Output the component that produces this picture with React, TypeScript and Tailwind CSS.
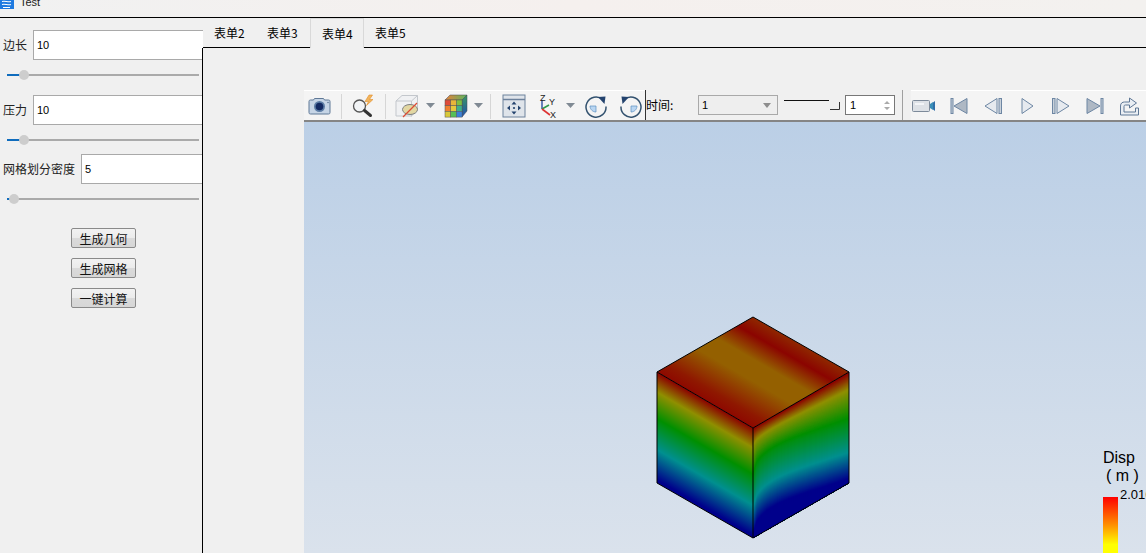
import type { ReactNode } from "react";

const CJK = "font-['Noto_Sans_CJK_SC','Liberation_Sans',sans-serif]";

// value ramp used on the result plot: 0 = red ... 1 = blue
const ramp: [number, number[]][] = [
  [0, [139, 0, 0]],
  [0.15, [143, 143, 0]],
  [0.41, [0, 143, 0]],
  [0.72, [0, 143, 143]],
  [0.96, [0, 0, 139]],
  [1, [0, 0, 139]],
];

function rampColor(t: number) {
  for (let i = 1; i < ramp.length; i++) {
    if (t <= ramp[i][0]) {
      const [t0, a] = ramp[i - 1];
      const [t1, b] = ramp[i];
      const k = (t - t0) / (t1 - t0);
      return `rgb(${a.map((v, j) => Math.round(v + (b[j] - v) * k)).join(",")})`;
    }
  }
  return "rgb(0,0,139)";
}

// right face has curved bands, so paint it back to front as filled regions
function rightFaceBands() {
  const bands = [];
  for (let i = 0; i <= 110; i++) {
    const t = i / 110;
    const bow = 16 * Math.min(1, t * 2.2);
    const pts: string[] = [];
    for (let x = 0; x <= 96; x += 4) {
      const u = x / 96;
      const y = 428 - (55.5 * x) / 96 + t * 110 - bow * Math.sin(Math.PI * Math.pow(u, 0.45));
      pts.push(`${753 + x},${y.toFixed(1)}`);
    }
    bands.push(<polygon key={i} points={`${pts.join(" ")} 849,560 753,560`} fill={rampColor(t)} />);
  }
  return bands;
}

function Slider({ thumb, className }: { thumb: number; className: string }) {
  return (
    <div className={`relative ml-[7px] h-[2px] w-[192px] bg-[#aaaaaa] ${className}`}>
      <div className="h-[2px] bg-[#0f6cbd]" style={{ width: thumb }} />
      <div
        className="absolute top-[-4px] h-[10px] w-[10px] rounded-full bg-[#cdcdcd]"
        style={{ left: thumb - 5 }}
      />
    </div>
  );
}

function Field({ label, value, labelWidth, className }: { label: string; value: string; labelWidth: string; className: string }) {
  return (
    <div className={`flex h-[30px] items-center ${className}`}>
      <span className={`${labelWidth} shrink-0 pl-[3px] text-[12px] text-[#222]`}>{label}</span>
      <div className="flex h-[30px] flex-1 items-center border border-r-0 border-[#a9a9a9] bg-white pl-[3px] font-['Liberation_Sans'] text-[11px] text-black">
        {value}
      </div>
    </div>
  );
}

function ActionButton({ children, className }: { children: ReactNode; className: string }) {
  return (
    <button className={`ml-[71px] block h-[20px] w-[65px] rounded-[2px] border border-[#8a8a8a] bg-[linear-gradient(#f2f2f2_0%,#ebebeb_50%,#dadada_52%,#d6d6d6_100%)] text-[12px] leading-[17px] text-[#111] ${className}`}>
      {children}
    </button>
  );
}

function Tab({ label, width, active }: { label: string; width: string; active?: boolean }) {
  return (
    <div
      className={`flex h-[30px] ${width} items-center pl-[11px] text-[12px] text-black ${
        active ? "relative z-10 border border-b-0 border-[#d9d9d9] bg-[#f0f0f0] pl-[10px]" : "border-b border-black"
      }`}
    >
      {label}
    </div>
  );
}

function Sep({ w }: { w: string }) {
  return <div className={`flex h-[30px] ${w} shrink-0 justify-center pt-[3px]`}><div className="h-[25px] w-px bg-[#d6d6d6]" /></div>;
}

function Arrow({ w }: { w: string }) {
  return (
    <div className={`flex ${w} shrink-0 items-center justify-center`}>
      <svg width="9" height="5" className="shrink-0"><path d="M0 0h9L4.500 5z" fill="#808a94" /></svg>
    </div>
  );
}

function Tool({ w, children }: { w: string; children: ReactNode }) {
  return <div className={`flex h-[30px] ${w} shrink-0 items-center justify-center`}>{children}</div>;
}

function CameraIcon() {
  return (
    <svg width="24" height="20" viewBox="0 0 24 20">
      <path d="M1 5.500c0-1 .6-1.500 1.500-1.500h3l1-1.500h9l1 1.500h4c1 0 1.500.5 1.500 1.500v11c0 1-.5 1.500-1.500 1.500h-18c-1 0-1.500-.5-1.500-1.500z" fill="#c6d5e6" stroke="#5f7896" />
      <circle cx="11.500" cy="10.500" r="5.500" fill="#5d7ea6" />
      <circle cx="11.500" cy="10.500" r="3.800" fill="#132a63" />
      <circle cx="20" cy="6.500" r="0.800" fill="#5f7896" />
    </svg>
  );
}

function ZoomBoltIcon() {
  return (
    <svg width="26" height="24" viewBox="0 0 26 24">
      <circle cx="8.500" cy="12" r="6" fill="#f2f4f6" stroke="#555" strokeWidth="1.300" />
      <path d="M13.500 16.500L19.500 21.500" stroke="#333" strokeWidth="3" strokeLinecap="round" />
      <path d="M18 1l-4 6.500h3.500l-2 4 6.500-6h-3.500l3-4.500z" fill="#f2b45c" stroke="#e08e2c" strokeWidth="0.600" />
    </svg>
  );
}

function HideCubeIcon() {
  return (
    <svg width="24" height="24" viewBox="0 0 24 24">
      <path d="M1 7l6-5.500h15.500v14l-6 6.500H1z" fill="#f0f1f3" stroke="#c3c7cc" />
      <path d="M1 7h15.500v15.500M16.500 7l6-5.500" fill="none" stroke="#c3c7cc" />
      <ellipse cx="15" cy="15.500" rx="7.500" ry="5" fill="#e2d7a2" stroke="#7d7f80" />
      <path d="M8 23L22 9" stroke="#dd4a33" strokeWidth="1.200" />
    </svg>
  );
}

function ColorCubeIcon() {
  const front = [
    ["#e04b3a", "#e8b53a", "#7fbf3f"],
    ["#f08030", "#e6c83c", "#3fb08a"],
    ["#d8c83a", "#55bf55", "#3a80d8"],
  ];
  return (
    <svg width="24" height="24" viewBox="0 0 24 24">
      <defs>
        <linearGradient id="cubeTop" x1="0" x2="1" y1="0" y2="0">
          <stop offset="0" stopColor="#e8803a" />
          <stop offset="1" stopColor="#58b860" />
        </linearGradient>
        <linearGradient id="cubeSide" x1="0" x2="0" y1="0" y2="1">
          <stop offset="0" stopColor="#3a9a60" />
          <stop offset="1" stopColor="#1f4fb0" />
        </linearGradient>
      </defs>
      <path d="M1 6l5-5h17l-5 5z" fill="url(#cubeTop)" stroke="#445" strokeWidth="0.500" />
      <path d="M18 6l5-5v16l-5 6z" fill="url(#cubeSide)" stroke="#445" strokeWidth="0.500" />
      {front.map((row, r) =>
        row.map((c, i) => <rect key={`${r}${i}`} x={1 + i * 5.700} y={6 + r * 5.700} width="5.700" height="5.700" fill={c} stroke="#555" strokeWidth="0.500" />)
      )}
    </svg>
  );
}

function FitIcon() {
  return (
    <svg width="24" height="24" viewBox="0 0 24 24">
      <rect x="1" y="1" width="22" height="22" fill="#dfe4ea" stroke="#6d829c" />
      <path d="M1 5.500h22" stroke="#6d829c" strokeWidth="1.500" />
      <path d="M12 7.500l2.500 3h-5zM12 20.500l2.500-3h-5zM5 14l3-2.500v5zM19 14l-3-2.500v5z" fill="#24436e" />
      <circle cx="12" cy="14" r="1.100" fill="#24436e" />
    </svg>
  );
}

function AxesIcon() {
  return (
    <svg width="22" height="26" viewBox="0 0 22 26" className="font-['Liberation_Sans']">
      <path d="M7 16V7" stroke="#2a4fa0" strokeWidth="1.400" />
      <path d="M7 16l7-4" stroke="#2f9a4a" strokeWidth="1.600" />
      <path d="M7 16l8 6" stroke="#dd3333" strokeWidth="1.600" />
      <text x="5" y="8" fontSize="9" fill="#222">Z</text>
      <text x="14" y="12" fontSize="9" fill="#222">Y</text>
      <text x="15" y="25" fontSize="9" fill="#222">X</text>
    </svg>
  );
}

function RotateIcon({ flip }: { flip?: boolean }) {
  return (
    <svg width="24" height="24" viewBox="0 0 24 24" className={flip ? "-scale-x-100" : ""}>
      <path d="M18.500 5.500A10 10 0 1 0 22 12.500" fill="none" stroke="#33526f" strokeWidth="1.500" />
      <path d="M14 3l7.500-.5-1 7.500z" fill="#24436e" />
      <path d="M6 12h6v6c-3.300 0-6-2.700-6-6z" fill="#b9d6f2" stroke="#5d8fc0" strokeWidth="0.700" />
    </svg>
  );
}

function VideoIcon() {
  return (
    <svg width="26" height="18" viewBox="0 0 26 18">
      <rect x="0.500" y="3.500" width="17" height="11" rx="1" fill="#dde1e6" stroke="#7d8a9a" />
      <rect x="3" y="6" width="9" height="2" fill="#f2f4f7" />
      <path d="M18 7l3-2v8l-3-2z" fill="#3b8fb8" />
      <path d="M21 5.500l2-1.500v10l-2-1.500z" fill="#2f6fa8" />
    </svg>
  );
}

const playFill = "#c9d1da";
const playStroke = "#6d86a3";

function PlayIcon({ kind }: { kind: "first" | "prev" | "play" | "next" | "last" }) {
  const shapes = {
    first: <><rect x="2" y="2.500" width="2" height="15" fill={playFill} stroke={playStroke} /><path d="M18 2.500v15L5 10z" fill="#aeb8c4" stroke={playStroke} /></>,
    prev: <><rect x="16" y="2.500" width="2.500" height="15" fill={playFill} stroke={playStroke} /><path d="M14 2.500v15L2 10z" fill="#e6eaef" stroke={playStroke} /></>,
    play: <path d="M5 2.500v15L16 10z" fill="#e6eaef" stroke={playStroke} />,
    next: <><rect x="1.500" y="2.500" width="2.500" height="15" fill={playFill} stroke={playStroke} /><path d="M6 2.500v15L18 10z" fill="#e6eaef" stroke={playStroke} /></>,
    last: <><path d="M2 2.500v15L15 10z" fill="#aeb8c4" stroke={playStroke} /><rect x="16" y="2.500" width="2" height="15" fill={playFill} stroke={playStroke} /></>,
  };
  return <svg width="20" height="20" viewBox="0 0 20 20">{shapes[kind]}</svg>;
}

function ExportIcon() {
  return (
    <svg width="22" height="22" viewBox="0 0 22 22">
      <path d="M2.500 20V11c0-3 2-4 4-4h5V3l7 5-7 5v-3H7.500c-1 0-1.500.5-1.500 1.500V17h11.500v-4h3v7z" fill="#eaeef3" stroke="#5f7896" />
    </svg>
  );
}

function CubePlot() {
  return (
    <svg width="842" height="431" viewBox="304 122 842 431" className="absolute left-0 top-0">
      <defs>
        <linearGradient id="leftFace" gradientUnits="userSpaceOnUse" x1="705" y1="400" x2="657" y2="483">
          <stop offset="0" stopColor="#8b0000" />
          <stop offset="0.18" stopColor="#8f8f00" />
          <stop offset="0.42" stopColor="#008f00" />
          <stop offset="0.7" stopColor="#008f8f" />
          <stop offset="0.97" stopColor="#00008b" />
        </linearGradient>
        <linearGradient id="topFace" gradientUnits="userSpaceOnUse" x1="705" y1="400" x2="753" y2="317">
          <stop offset="0" stopColor="#8e0800" />
          <stop offset="0.12" stopColor="#8f1800" />
          <stop offset="0.42" stopColor="#946000" />
          <stop offset="0.62" stopColor="#946000" />
          <stop offset="0.84" stopColor="#8b0400" />
          <stop offset="1" stopColor="#8f2800" />
        </linearGradient>
        <clipPath id="rightClip">
          <polygon points="753,428 849,372 849,483 753,538" />
        </clipPath>
      </defs>
      <polygon points="753,317 849,372 753,428 657,372" fill="url(#topFace)" />
      <polygon points="657,372 753,428 753,538 657,483" fill="url(#leftFace)" />
      <g clipPath="url(#rightClip)">
        <rect x="753" y="360" width="96" height="180" fill="#8b0000" />
        {rightFaceBands()}
      </g>
      <g fill="none" stroke="#000" strokeWidth="1">
        <polygon points="753,317 849,372 849,483 753,538 657,483 657,372" />
        <path d="M657 372L753 428L849 372M753 428V538" />
      </g>
    </svg>
  );
}

export default function App() {
  return (
    <div className={`flex h-[553px] w-[1146px] flex-col overflow-hidden bg-[#f0f0f0] ${CJK}`}>
      {/* title bar */}
      <div className="flex h-[18px] shrink-0 items-start overflow-hidden border-b border-black bg-[linear-gradient(90deg,#f1f1f1,#f5f0ee_50%,#f3f1ef)]">
        <svg width="14" height="9" viewBox="0 0 14 9" className="shrink-0">
          <rect width="14" height="9" fill="#1f7ae0" />
          <path d="M2 1.500c3-1 6 1 9 0M2 4.500c3-1 6 1 9 0M3 7.500h7" fill="none" stroke="#fff" strokeWidth="1.100" />
        </svg>
        <span className="ml-[6px] mt-[-4px] font-['Liberation_Sans'] text-[11px] leading-[13px] text-[#222]">Test</span>
      </div>

      <div className="flex min-h-0 flex-1">
        {/* parameters */}
        <div className="w-[203px] shrink-0 pt-[12px]">
          <Field label="边长" value="10" labelWidth="w-[33px]" className="" />
          <Slider thumb={17} className="mt-[14px]" />
          <Field label="压力" value="10" labelWidth="w-[33px]" className="mt-[19px]" />
          <Slider thumb={17} className="mt-[14px]" />
          <Field label="网格划分密度" value="5" labelWidth="w-[81px]" className="mt-[13px]" />
          <Slider thumb={7} className="mt-[14px]" />
          <div className="mt-[28px]">
            <ActionButton className="">生成几何</ActionButton>
            <ActionButton className="mt-[10px]">生成网格</ActionButton>
            <ActionButton className="mt-[10px]">一键计算</ActionButton>
          </div>
        </div>

        {/* tabs and result view */}
        <div className="flex min-w-0 flex-1 flex-col">
          <div className="flex h-[30px] shrink-0">
            <Tab label="表单2" width="w-[53px]" />
            <Tab label="表单3" width="w-[54px]" />
            <Tab label="表单4" width="w-[54px]" active />
            <Tab label="表单5" width="w-[54px]" />
            <div className="flex-1 border-b border-black" />
          </div>
          <div className="ml-[-1px] flex min-h-0 flex-1 flex-col border-l border-black pl-[101px] pt-[42px]">
            <div className="flex h-[32px] shrink-0 border-b-2 border-[#858585] text-[12px] text-black">
              <div className="flex w-[341px] shrink-0 items-center border-t border-white bg-[#f4f4f4]">
                <Tool w="w-[32px]"><CameraIcon /></Tool>
                <Sep w="w-[10px]" />
                <Tool w="w-[35px]"><ZoomBoltIcon /></Tool>
                <Sep w="w-[8px]" />
                <Tool w="w-[36px]"><HideCubeIcon /></Tool>
                <Arrow w="w-[10px]" />
                <Tool w="w-[42px]"><ColorCubeIcon /></Tool>
                <Arrow w="w-[2px]" />
                <Sep w="w-[22px]" />
                <Tool w="w-[26px]"><FitIcon /></Tool>
                <Tool w="w-[38px]"><AxesIcon /></Tool>
                <Arrow w="w-[10px]" />
                <Tool w="w-[42px]"><RotateIcon /></Tool>
                <Tool w="w-[28px]"><RotateIcon flip /></Tool>
              </div>
              {/* time controls */}
              <div className="flex w-[257px] shrink-0 items-center border-l border-[#333] text-[12px]">
                <span className="w-[52px] shrink-0 whitespace-pre">时间:</span>
                <div className="flex h-[20px] w-[80px] shrink-0 items-center justify-between border border-[#a9a9a9] bg-[#eeeeee] px-[3px] font-['Liberation_Sans'] text-[11px]">
                  1
                  <svg width="8" height="5" className="mr-[3px]"><path d="M0 0h8L4 5z" fill="#8d8d8d" /></svg>
                </div>
                <svg width="57" height="14" className="ml-[6px] shrink-0">
                  <path d="M0 2.500h45" stroke="#111" />
                  <path d="M46 11.500h9.500V4" fill="none" stroke="#333" />
                </svg>
                <div className="ml-[4px] flex h-[20px] w-[50px] shrink-0 items-center justify-between border border-[#777] bg-white px-[4px] font-['Liberation_Sans'] text-[11px]">
                  1
                  <svg width="6" height="11"><path d="M0 4l3-3 3 3zM0 7l3 3 3-3z" fill="#aaa" /></svg>
                </div>
              </div>
              <div className="flex h-[30px] w-[9px] shrink-0 items-center"><div className="h-[30px] w-px bg-[#a0a0a0]" /></div>
              <div className="flex min-w-0 flex-1 items-center border-t border-white bg-[#f4f4f4]">
                <Tool w="w-[27px]"><VideoIcon /></Tool>
                <Tool w="w-[41px]"><PlayIcon kind="first" /></Tool>
                <Tool w="w-[27px]"><PlayIcon kind="prev" /></Tool>
                <Tool w="w-[41px]"><PlayIcon kind="play" /></Tool>
                <Tool w="w-[27px]"><PlayIcon kind="next" /></Tool>
                <Tool w="w-[41px]"><PlayIcon kind="last" /></Tool>
                <Tool w="w-[27px]"><ExportIcon /></Tool>
              </div>
            </div>

            {/* 3d viewport */}
            <div className="relative min-h-0 flex-1 overflow-hidden bg-[linear-gradient(#bbcfe6,#dae2ec)]">
              <CubePlot />
              <div className="absolute left-[799px] top-[327px] font-['Liberation_Sans'] text-[16px] leading-[18px] text-black">
                <div>Disp</div>
                <div className="ml-[3px] whitespace-pre">( m )</div>
              </div>
              <div className="absolute left-[799px] top-[375px] h-[56px] w-[15px] bg-[linear-gradient(#ff0000,#ff9000_50%,#ffff00_85%)]" />
              <div className="absolute left-[816px] top-[366px] whitespace-nowrap font-['Liberation_Sans'] text-[13px] leading-[14px] text-black">2.016</div>
            </div>
          </div>
        </div>
      </div>
    </div>
  );
}
